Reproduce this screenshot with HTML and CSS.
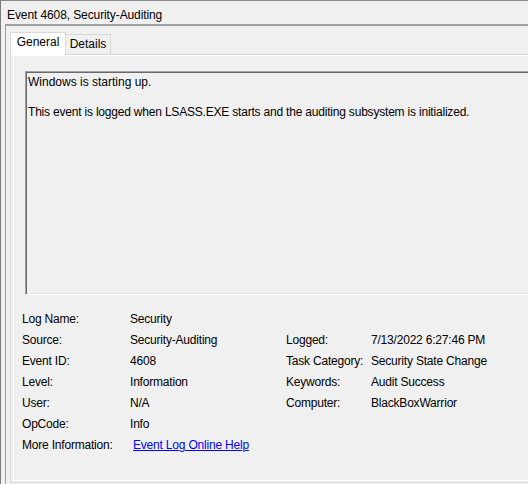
FILE: index.html
```html
<!DOCTYPE html>
<html>
<head>
<meta charset="utf-8">
<title>Event 4608, Security-Auditing</title>
<link rel="stylesheet" href="styles.css">
</head>
<body>
<div class="window">
  <div class="title">Event 4608, Security-Auditing</div>
  <div class="frame">
    <div class="tabs">
      <div class="tab selected">General</div>
      <div class="tab">Details</div>
    </div>
    <div class="panel">
      <div class="page">
        <div class="desc">
          <p>Windows is starting up.</p>
          <p class="long">This event is logged when LSASS.EXE starts and the auditing subsystem is initialized.</p>
        </div>
        <div class="props">
          <div class="lbl">Log Name:</div><div class="val">Security</div><div class="lbl"></div><div class="val"></div>
          <div class="lbl">Source:</div><div class="val">Security-Auditing</div><div class="lbl">Logged:</div><div class="val">7/13/2022 6:27:46 PM</div>
          <div class="lbl">Event ID:</div><div class="val">4608</div><div class="lbl">Task Category:</div><div class="val">Security State Change</div>
          <div class="lbl">Level:</div><div class="val">Information</div><div class="lbl">Keywords:</div><div class="val">Audit Success</div>
          <div class="lbl">User:</div><div class="val">N/A</div><div class="lbl">Computer:</div><div class="val">BlackBoxWarrior</div>
          <div class="lbl">OpCode:</div><div class="val">Info</div><div class="lbl"></div><div class="val"></div>
          <div class="lbl">More Information:</div><div class="val"><a class="link" href="#">Event Log Online Help</a></div><div class="lbl"></div><div class="val"></div>
        </div>
      </div>
    </div>
  </div>
</div>
</body>
</html>
```
FILE: styles.css
```css
html, body {
  margin: 0;
  padding: 0;
  overflow: hidden;
  background: #f0f0f0;
}
body {
  font-family: "Liberation Sans", Arial, sans-serif;
  font-size: 12px;
  color: #000;
}
.window {
  width: 720px;
  height: 484px;
  box-sizing: border-box;
  border-top: 1px solid #8a8a8a;
  border-left: 1px solid #7a7a7a;
}
.title {
  height: 16px;
  padding: 7px 0 0 6px;
  line-height: 14px;
  white-space: nowrap;
  letter-spacing: -0.1px;
}
.frame {
  margin-left: 4px;
  border-top: 2px solid #a0a0a0;
  border-left: 1px solid #a0a0a0;
  padding: 6px 0 0 4px;
  height: 460px;
  box-sizing: border-box;
}
.tabs {
  display: flex;
  align-items: flex-end;
  height: 22px;
}
.tab {
  box-sizing: border-box;
  border: 1px solid #d9d9d9;
  border-bottom: none;
  padding-top: 2px;
  line-height: 15px;
  text-align: center;
  background: #f0f0f0;
  height: 20px;
  width: 46px;
  margin-left: -1px;
}
.tab.selected {
  position: relative;
  z-index: 1;
  background: #fff;
  height: 23px;
  width: 56px;
  margin-left: 0;
  margin-bottom: -1px;
}
.panel {
  border: 1px solid #d9d9d9;
  padding-bottom: 1px;
}
.page {
  box-sizing: border-box;
  height: 426px;
  margin-left: 2px;
  border-top: 1px solid #fff;
  border-left: 1px solid #fff;
  border-bottom: 1px solid #fff;
}
.desc {
  margin: 15px 0 0 11px;
  height: 224px;
  box-sizing: border-box;
  border-top: 1px solid #a0a0a0;
  border-left: 1px solid #a0a0a0;
  border-bottom: 1px solid #fff;
  box-shadow: inset 1px 1px 0 #696969, inset 0 -1px 0 #e3e3e3;
  padding: 3px 0 0 2px;
  line-height: 15px;
}
.desc p {
  margin: 0 0 15px 0;
  white-space: nowrap;
}
.desc p.long {
  letter-spacing: -0.2px;
}
.props {
  margin: 14px 0 0 8px;
  display: grid;
  grid-template-columns: 108px 156px 85px auto;
  grid-auto-rows: 21px;
  line-height: 21px;
  white-space: nowrap;
  letter-spacing: -0.2px;
}
.link {
  color: #0000ff;
  text-decoration: underline;
  padding-left: 3px;
}
```
